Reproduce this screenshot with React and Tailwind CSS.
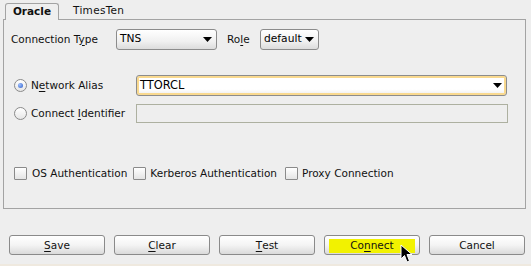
import React from "react";

const Arrow = () => (
  <svg width="9" height="5" viewBox="0 0 9 5" className="shrink-0">
    <path d="M0 0 H9 L4.5 5 Z" fill="#000" />
  </svg>
);

const Combo = ({ value, w, focus }) => (
  <div
    className={`flex items-center justify-between h-[21px] rounded-[3px] border border-[#8c8c8c] pl-[3px] pr-[4px] ${w} ${
      focus
        ? "bg-[linear-gradient(#ffffff,#ffffff_70%,#ececec)] shadow-[inset_0_0_0_2px_#f9d98f]"
        : "bg-[linear-gradient(#ffffff,#f0f0f0_60%,#dcdcdc)]"
    }`}
  >
    <span className={`leading-none text-black ${focus ? "text-[11.4px]" : "text-[10.7px]"}`}>{value}</span>
    <Arrow />
  </div>
);

const Radio = ({ checked }) => (
  <div className="w-[13px] h-[13px] rounded-full border border-[#8a8a8a] bg-[linear-gradient(#ffffff,#e6e6e6)] flex items-center justify-center shrink-0">
    {checked && (
      <div className="w-[5px] h-[5px] rounded-full bg-[radial-gradient(circle_at_35%_35%,#9fc0ff,#2f5fc8)]" />
    )}
  </div>
);

const Check = () => (
  <div className="w-[13px] h-[13px] rounded-[1px] border border-[#8a8a8a] bg-[linear-gradient(#ffffff,#e4e4e4)] shrink-0" />
);

const U = ({ children }) => <span className="underline underline-offset-[2px]">{children}</span>;

const Btn = ({ children, highlight }) => (
  <div className="w-[96px] h-[20px] rounded-[3px] border border-[#8a8a8a] bg-[linear-gradient(#ffffff,#f4f4f4_50%,#dadada)] flex items-center justify-center p-[2px]">
    <div
      className={`w-full h-full flex items-center justify-center text-[10.5px] leading-none ${
        highlight ? "bg-[#f2f200] mx-[2px] mt-[1px]" : ""
      }`}
    >
      {children}
    </div>
  </div>
);

export default function App() {
  return (
    <div className="relative w-[531px] h-[266px] bg-[#eeeeee] text-[10.5px] text-[#111] font-['DejaVu_Sans',sans-serif] overflow-hidden">
      {/* tabs */}
      <div className="flex items-end h-[19px] pl-[5px]">
        <div className="relative z-10 -mb-px w-[54px] h-[17px] border border-b-0 border-[#a3a3a3] rounded-t-[3px] bg-[#efefef] flex items-center justify-center font-bold text-[10.5px]">
          Oracle
        </div>
        <div className="ml-[14px] h-[16px] flex items-center text-[10.5px] tracking-[0.3px]">TimesTen</div>
      </div>

      {/* panel */}
      <div className="mx-[3px] w-[523px] h-[190px] border border-[#a3a3a3] flex flex-col">
        {/* row 1 */}
        <div className="flex items-center mt-[9px] pl-[7px]">
          <div className="w-[105px]">
            Connection T<U>y</U>pe
          </div>
          <Combo value="TNS" w="w-[101px]" />
          <div className="ml-[10px] w-[33px]">
            Ro<U>l</U>e
          </div>
          <Combo value="default" w="w-[59px]" />
        </div>

        {/* row 2 */}
        <div className="flex items-center mt-[25px] pl-[10px]">
          <Radio checked />
          <div className="ml-[4px] w-[105px]">
            N<U>e</U>twork Alias
          </div>
          <Combo value="TTORCL" w="w-[371px]" focus />
        </div>

        {/* row 3 */}
        <div className="flex items-center mt-[8px] pl-[10px]">
          <Radio />
          <div className="ml-[4px] w-[105px]">
            Connect <U>I</U>dentifier
          </div>
          <div className="w-[372px] h-[19px] border border-[#adb0a0] bg-[#eeeeee]" />
        </div>

        {/* row 4 */}
        <div className="flex items-center mt-[43px] pl-[10px]">
          <Check />
          <div className="ml-[5px] mr-[6px]">OS Authentication</div>
          <Check />
          <div className="ml-[4px] mr-[8px]">Kerberos Authentication</div>
          <Check />
          <div className="ml-[4px]">Proxy Connection</div>
        </div>
      </div>

      {/* buttons */}
      <div className="flex gap-[9px] pl-[9px] mt-[26px]">
        <Btn>
          <U>S</U>ave
        </Btn>
        <Btn>
          <U>C</U>lear
        </Btn>
        <Btn>
          <U>T</U>est
        </Btn>
        <Btn highlight>
          Co<U>n</U>nect
        </Btn>
        <Btn>Cancel</Btn>
      </div>

      <div className="absolute left-0 right-0 bottom-0 h-[2px] bg-[#efe9df]" />

      {/* cursor */}
      <svg className="absolute left-[400px] top-[244px]" width="13" height="20" viewBox="0 0 13 20">
        <path d="M1 1 L1 15 L4.5 11.5 L7 18 L9.5 17 L7 10.5 L12 10.5 Z" fill="#000" stroke="#fff" strokeWidth="1" />
      </svg>
    </div>
  );
}
